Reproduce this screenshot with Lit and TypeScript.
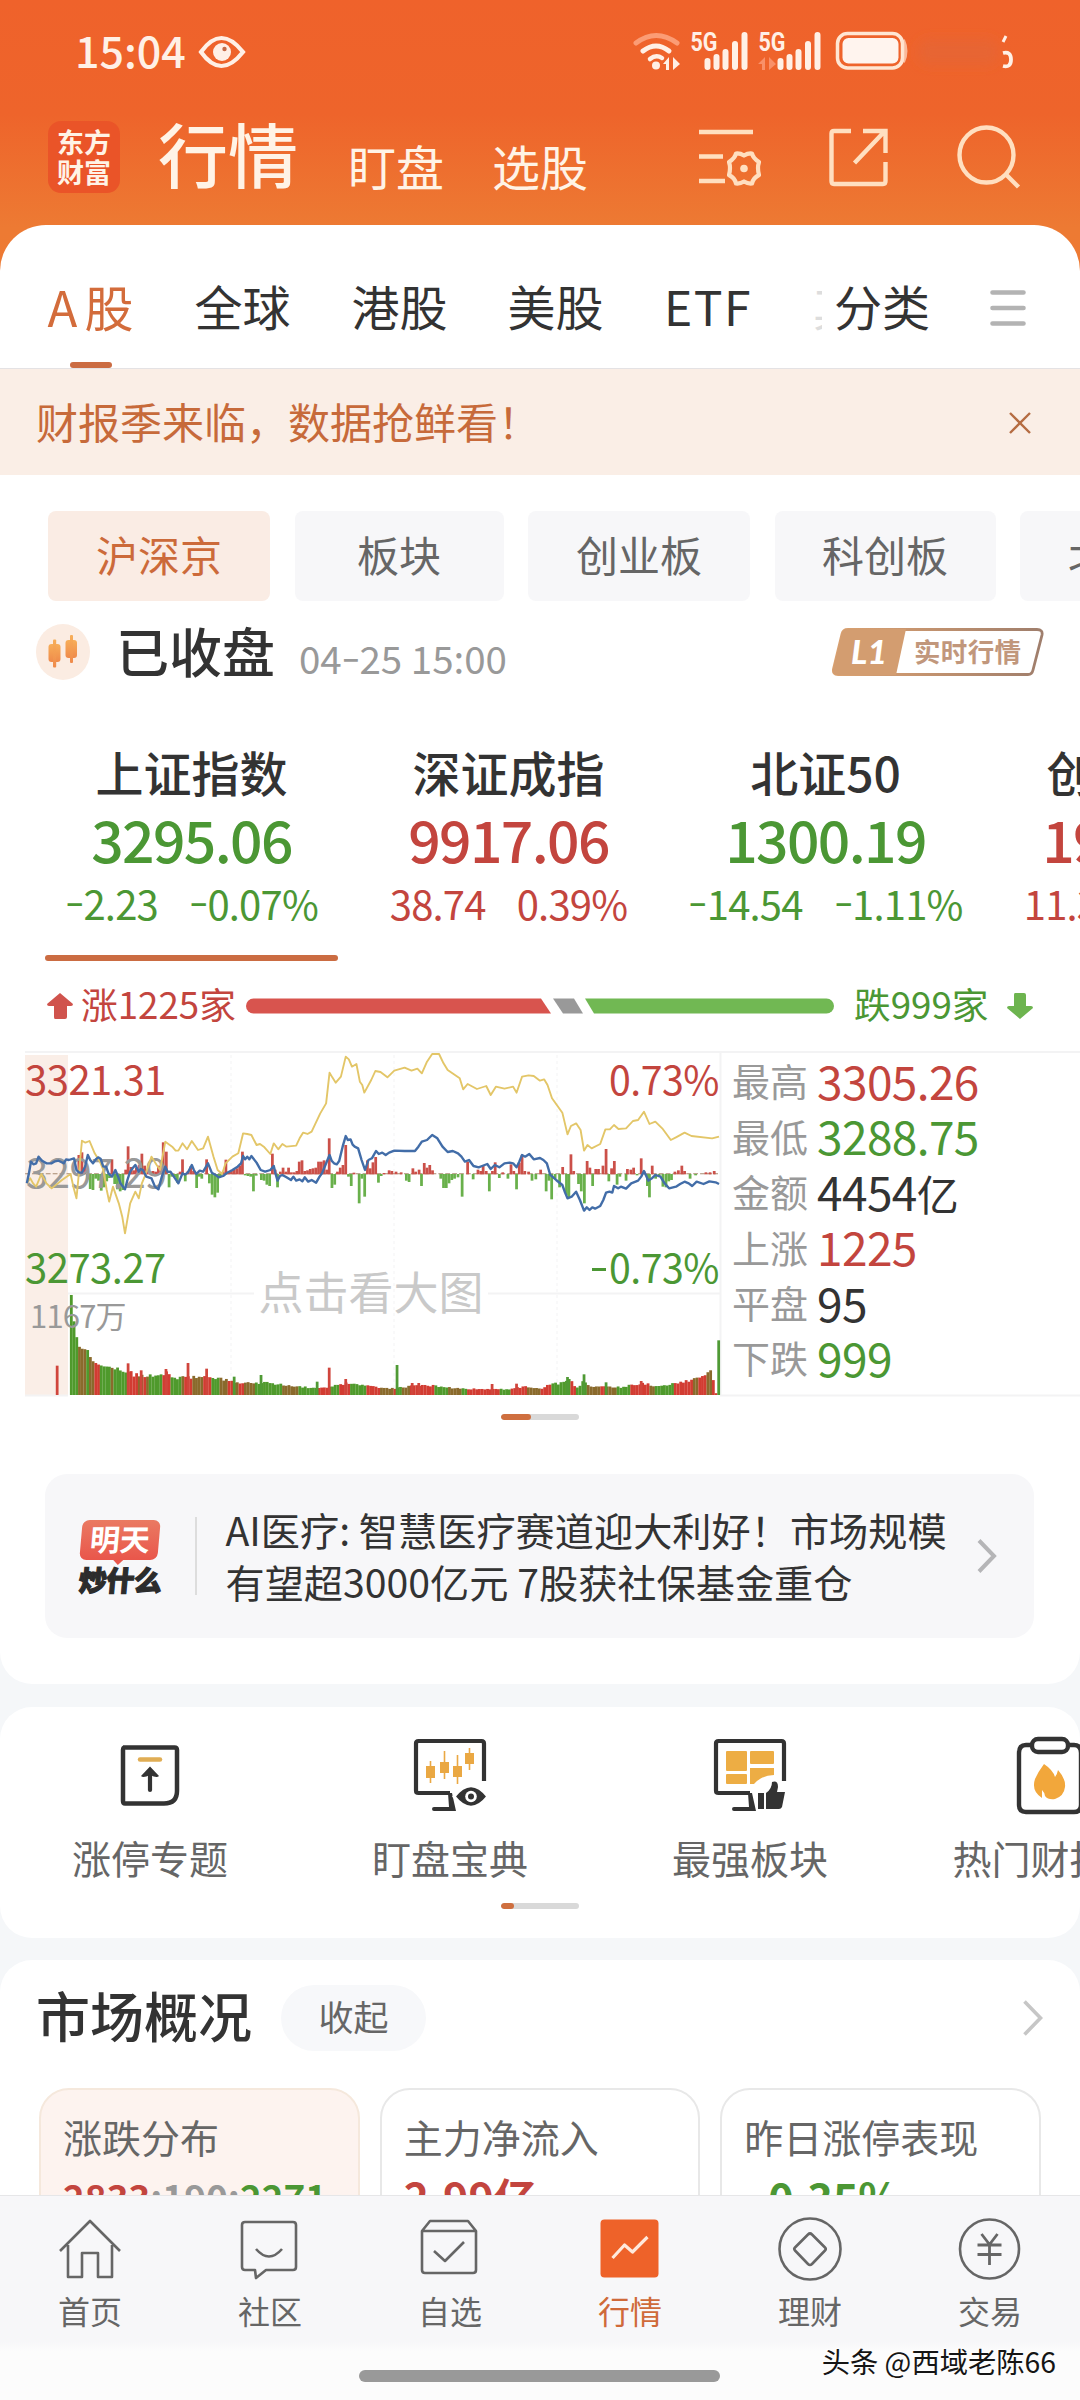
import { LitElement, html, svg, css } from "lit";
import { customElement } from "lit/decorators.js";

const TABS = [
  { label: "A股", w: 182, active: true },
  { label: "全球", w: 121 },
  { label: "港股", w: 193 },
  { label: "美股", w: 119 },
  { label: "ETF", w: 186, latin: true },
];

const CHIPS = [
  { label: "沪深京", w: 222, active: true },
  { label: "板块", w: 209 },
  { label: "创业板", w: 222 },
  { label: "科创板", w: 221 },
];

const INDICES = [
  { name: "上证指数", value: "3295.06", diff: "-2.23", pct: "-0.07%", cls: "down", active: true },
  { name: "深证成指", value: "9917.06", diff: "38.74", pct: "0.39%", cls: "up" },
  { name: "北证50", value: "1300.19", diff: "-14.54", pct: "-1.11%", cls: "down" },
  { name: "创业板指", value: "1947.19", diff: "11.33", pct: "0.59%", cls: "up" },
];

const STATS = [
  ["最高", "3305.26", "up"],
  ["最低", "3288.75", "down"],
  ["金额", "4454亿", "flat"],
  ["上涨", "1225", "up"],
  ["平盘", "95", "flat"],
  ["下跌", "999", "down"],
];

/* Hyphens sit at digit mid-height and are drawn wider than the font's own. */
const dashed = (s: string) => s.split(/(-)/).map((p) => (p === "-" ? html`<span class="dash">-</span>` : p));

/* Chart geometry is kept in plot units: 2.904 per px across, 3 per px down. */
const YELLOW =
  "78,640 88,625 96,640 105,650 120,612 135,640 150,655 180,630 205,612 213,650 222,685 230,600 238,512 248,518 260,513 275,550 290,575 300,600 310,660 317,695 328,650 345,700 355,740 363,790 378,700 393,665 403,685 412,640 420,620 440,560 455,585 465,600 480,515 500,530 510,542 518,542 530,520 543,538 557,513 575,540 590,535 604,500 612,530 620,560 632,600 645,612 655,580 675,560 692,550 706,490 718,492 730,495 745,525 755,522 768,532 785,552 795,520 808,538 820,522 832,530 860,527 870,505 880,488 893,492 905,485 930,430 947,400 957,308 965,322 975,338 990,320 1004,260 1013,268 1022,290 1035,282 1045,335 1052,345 1058,368 1078,330 1090,303 1105,306 1125,322 1145,302 1175,293 1195,302 1212,296 1225,310 1240,275 1255,252 1275,252 1288,280 1300,300 1335,325 1345,358 1358,342 1385,357 1412,348 1425,375 1440,350 1465,356 1490,350 1500,368 1516,320 1535,316 1550,318 1568,332 1580,328 1590,345 1603,385 1633,428 1648,493 1658,468 1673,460 1686,480 1696,542 1706,525 1718,535 1743,522 1758,478 1771,478 1783,465 1796,477 1818,475 1838,453 1853,450 1870,425 1886,462 1903,455 1923,475 1948,510 1963,502 1988,488 2008,498 2068,505 2088,500";
const BLUE =
  "78,640 84,610 90,575 97,583 105,580 112,560 122,572 135,580 150,580 160,574 170,572 185,580 192,568 200,570 215,565 222,600 230,608 238,608 247,590 255,555 262,570 270,580 278,568 285,562 292,566 300,590 308,590 315,610 325,620 335,600 343,620 350,640 357,650 363,658 370,630 378,605 385,595 393,585 403,605 409,597 415,600 425,620 440,625 450,650 460,658 470,620 480,590 487,606 495,605 505,620 518,640 530,610 537,614 545,608 557,585 563,600 570,612 580,602 590,605 604,580 615,608 625,614 635,622 648,618 660,608 675,600 690,590 700,580 706,558 712,568 718,560 724,568 730,558 745,578 757,600 770,605 785,600 795,588 800,610 806,632 813,618 820,615 832,622 845,630 852,620 860,632 870,628 878,634 885,622 895,635 905,630 918,638 928,620 935,610 945,585 957,555 963,572 970,580 978,583 985,573 995,530 1004,498 1010,510 1018,508 1024,524 1030,530 1040,535 1050,570 1060,600 1070,570 1080,565 1092,543 1100,552 1110,548 1120,555 1130,548 1145,542 1175,543 1205,543 1215,530 1225,515 1240,510 1255,495 1270,505 1285,530 1300,546 1315,543 1330,550 1340,560 1350,575 1362,570 1375,588 1390,592 1400,588 1415,582 1425,597 1437,585 1450,592 1465,580 1480,578 1490,580 1500,592 1508,575 1516,555 1525,560 1537,552 1550,568 1568,564 1578,570 1588,580 1598,615 1615,630 1633,645 1641,668 1648,685 1660,680 1673,665 1684,690 1696,722 1704,712 1712,720 1720,712 1728,716 1743,708 1752,690 1760,668 1770,665 1778,668 1783,648 1795,655 1803,650 1818,656 1833,640 1853,632 1862,620 1870,603 1883,632 1893,625 1903,615 1918,620 1930,640 1943,655 1963,650 1975,642 1988,635 2000,640 2010,648 2023,635 2043,642 2060,634 2078,637 2088,642";

/* [x, height]: positive rises in red, negative falls in green */
const FLOW: number[][] = [
  [229,58],[238,66],[246,20],[254,-16],[262,-45],[270,-48],[278,-14],[286,-20],[294,-50],[302,-40],[310,-22],[318,-12],[325,45],[333,-30],[341,-46],[349,-52],[357,-48],[365,14],[372,84],[380,22],[388,12],[396,20],[404,28],[412,62],[420,26],[428,14],[436,8],[444,10],[452,8],[460,26],[468,36],[474,96],[483,68],[491,-40],[499,-8],[507,-10],[515,-26],[523,8],[530,45],[538,-22],[546,10],[554,24],[562,10],[571,-42],[579,-8],[586,-14],[600,45],[608,-28],[616,-62],[624,-70],[632,-56],[640,-6],[648,8],[656,44],[664,8],[672,12],[680,14],[688,18],[696,26],[704,68],[712,-4],[720,-6],[728,-8],[736,-52],[744,-5],[759,-18],[767,-20],[775,-32],[783,-36],[791,62],[799,14],[806,-40],[814,8],[822,20],[830,8],[838,20],[846,6],[854,6],[862,10],[869,38],[877,42],[885,10],[893,12],[901,16],[909,18],[917,20],[925,38],[933,38],[941,42],[949,14],[956,108],[964,-42],[972,-32],[980,8],[988,20],[996,28],[1004,88],[1012,-8],[1020,-36],[1028,5],[1043,-88],[1051,-14],[1059,-68],[1067,42],[1075,18],[1083,36],[1091,52],[1099,-26],[1107,-6],[1115,4],[1130,12],[1138,10],[1150,8],[1165,6],[1180,-20],[1188,-24],[1199,18],[1207,8],[1217,14],[1224,-36],[1232,34],[1240,20],[1248,28],[1256,12],[1280,-14],[1288,-42],[1296,-42],[1304,-28],[1312,-18],[1320,-14],[1330,-10],[1342,-68],[1358,38],[1374,-16],[1388,14],[1396,10],[1403,28],[1412,10],[1421,-52],[1430,10],[1438,36],[1450,-12],[1460,6],[1475,-14],[1484,30],[1492,10],[1500,-46],[1508,34],[1516,58],[1524,10],[1535,8],[1545,-20],[1556,-16],[1570,14],[1586,-52],[1594,-20],[1602,-76],[1612,-14],[1625,-40],[1634,22],[1645,-64],[1652,-70],[1658,60],[1666,10],[1680,-30],[1688,-52],[1697,-88],[1705,40],[1713,20],[1721,-36],[1730,16],[1738,16],[1751,26],[1760,76],[1768,-22],[1776,18],[1784,40],[1792,-32],[1800,-8],[1818,-20],[1822,16],[1832,14],[1840,20],[1850,-4],[1862,48],[1870,10],[1880,-36],[1886,-70],[1894,26],[1904,-14],[1914,-6],[1925,-38],[1934,-40],[1942,-22],[1950,-18],[1960,8],[1970,12],[1980,26],[1988,10],[2004,-14],[2020,-4],[2050,6],[2062,6],[2074,10],
];

const VOL_KEYS: number[][] = [
  [203,300],[213,200],[220,168],[228,140],[250,136],[262,104],[280,92],[300,85],[330,78],[362,74],[385,62],[420,60],[480,66],[500,52],[560,56],[620,52],[660,44],[700,35],[760,38],[820,32],[900,22],[940,22],[970,30],[1003,36],[1060,28],[1100,22],[1140,20],[1200,28],[1260,28],[1320,20],[1400,18],[1480,18],[1520,26],[1568,18],[1603,40],[1622,34],[1650,50],[1670,22],[1690,40],[1710,26],[1800,24],[1860,36],[1900,28],[1960,35],[2020,50],[2050,66],[2066,78],[2069,6],[2080,6],
];
const VOL_SPIKES: number[][] = [
  [166,88,1],[372,95,1],[410,74,1],[482,78,1],[546,96,1],[600,79,1],[680,55,0],[758,60,0],[921,40,0],[956,82,1],[1004,48,1],[1153,90,0],[1197,36,1],[1216,36,1],[1429,33,1],[1500,34,1],[1648,54,0],[1696,62,0],[1760,38,0],[1862,42,1],[2087,164,0],
];

function volumeAt(x: number): number {
  for (let i = 1; i < VOL_KEYS.length; i++) {
    const [x1, h1] = VOL_KEYS[i];
    const [x0, h0] = VOL_KEYS[i - 1];
    if (x <= x1) return h0 + ((h1 - h0) * (x - x0)) / (x1 - x0);
  }
  return 6;
}

/* Runs of bar colours, [end x, colour]: g green, r red, b mixed */
const VOL_RUNS: [number, string][] = [
  [224, "g"], [246, "b"], [254, "g"], [270, "b"], [286, "r"], [318, "g"], [328, "b"], [366, "g"], [396, "r"], [412, "b"], [420, "r"], [432, "b"], [464, "g"], [488, "r"], [526, "g"], [534, "b"], [556, "r"], [588, "b"], [610, "r"], [634, "g"], [660, "b"], [676, "r"], [690, "b"], [704, "r"], [736, "b"], [792, "g"], [812, "g"], [860, "b"], [918, "g"], [950, "r"], [984, "g"], [1016, "r"], [1060, "g"], [1096, "r"], [1138, "b"], [1150, "r"], [1166, "g"], [1190, "b"], [1254, "r"], [1300, "g"], [1340, "b"], [1352, "g"], [1450, "r"], [1478, "g"], [1528, "r"], [1568, "b"], [1600, "r"], [1654, "g"], [1672, "r"], [1704, "g"], [1740, "b"], [1752, "r"], [1790, "b"], [1830, "g"], [1880, "r"], [1900, "b"], [1952, "g"], [2010, "r"], [2024, "b"], [2050, "r"], [2066, "b"], [2080, "r"],
];
const VOL_COLORS: Record<string, string> = { g: "#4f9a2c", r: "#d23c32", b: "#8a6a2c" };

function volumeBars() {
  const out = [];
  let seed = 11;
  let run = 0;
  for (let x = 203; x < 2078; x += 7.9) {
    seed = (seed * 1103 + 377) % 9973;
    const r = seed / 9973;
    while (run < VOL_RUNS.length - 1 && x > VOL_RUNS[run][0]) run++;
    const h = volumeAt(x) * (x < 300 ? 1 : 0.88 + r * 0.2);
    out.push(svg`<rect x=${x} y=${1275 - h} width="8.2" height=${h} fill=${VOL_COLORS[VOL_RUNS[run][1]]} />`);
  }
  for (const [x, h, up] of VOL_SPIKES) {
    out.push(svg`<rect x=${x - 4} y=${1275 - h} width="8" height=${h} fill=${up ? "#d0453c" : "#4f9a35"} />`);
  }
  return out;
}

const PLOT = "translate(0 -81) scale(.34436 .33333)";

const chart = svg`
  <rect x="25" y="4" width="43" height="340" fill="#faeee7"/>
  <g stroke="#f3f3f4" stroke-width="2">
    <path d="M25 1H1080M68 242.500H254M488 242.500H720M25 344.500H68M720 344.500H1080M720.500 1V344"/>
    <path d="M231 4V344M394 4V344M557 4V344" stroke-width="1" stroke-dasharray="3 3"/>
  </g>
  <g transform=${PLOT}>
    <path d="M73 611H2085" stroke="#a98a70" stroke-width="3" stroke-dasharray="14 6"/>
    ${FLOW.map(([x, h]) => svg`<rect x=${x - 4} y=${h > 0 ? 613 - h : 612} width="8" height=${Math.abs(h)} fill=${h > 0 ? "#cb5049" : "#69b04b"} />`)}
    ${volumeBars()}
  </g>
  <g letter-spacing="-.5">
    <text x="26" y="137" font-size="40" fill="#999">3297.29</text>
    <text x="30" y="277" font-size="31" fill="#999" letter-spacing="-.8">1167万</text>
  </g>
  <g transform=${PLOT}>
    <polyline points=${YELLOW} fill="none" stroke="#e3c668" stroke-width="5.500" stroke-linejoin="round"/>
    <polyline points=${BLUE} fill="none" stroke="#426da8" stroke-width="7" stroke-linejoin="round"/>
  </g>
  <g font-size="40" letter-spacing="-.5">
    <text x="25" y="44" fill="#c3453e">3321.31</text>
    <text x="25" y="232" fill="#4b9734">3273.27</text>
    <text x="609" y="44" fill="#c3453e" textLength="110" lengthAdjust="spacingAndGlyphs">0.73%</text>
    <text x="609" y="232" fill="#4b9734" textLength="110" lengthAdjust="spacingAndGlyphs">0.73%</text>
  </g>
  <path d="M592 218.500H606" stroke="#4b9734" stroke-width="3"/>
  <text x="371" y="259" font-size="45" fill="#c9c9c9" text-anchor="middle">点击看大图</text>
`;

const monitor = svg`
  <path d="M70 42V4.500Q70 2 67.500 2H4.500Q2 2 2 4.500V51.500Q2 54 4.500 54H36" fill="none" stroke="#333" stroke-width="4.200"/>
  <path d="M34 54H38L42 72H20Q18 72 18 70T20 68H35Z" fill="#333"/>`;

const TOOLS = [
  {
    label: "涨停专题",
    icon: svg`<path d="M9 8.500H60.500Q63 8.500 63 11V52Q63 64.500 50 64.500H11Q9 64.500 9 62V11Q9 8.500 11 8.500Z" fill="none" stroke="#333" stroke-width="4.500"/>
      <path d="M26 20.500H46" stroke="#e0ad54" stroke-width="4.500" stroke-linecap="round"/>
      <path d="M36 51V32" stroke="#333" stroke-width="4.200" stroke-linecap="round"/><path d="M36 27.500L45 37Q43 39.500 36 36Q29 39.500 27 37Z" fill="#333"/>`,
  },
  {
    label: "盯盘宝典",
    icon: svg`${monitor}<g fill="#eaa843"><path d="M12 27h9v12h-9zM26 23h9v11h-9zM39 27h9v11h-9zM51 14h9v11h-9z"/></g>
      <path d="M16.500 22V44M30.500 12V40M43.500 16V45M55.500 9V31" stroke="#eaa843" stroke-width="1.600"/>
      <path d="M40 57.500Q57 36 74 57.500Q57 79 40 57.500Z" fill="#333" stroke="#fff" stroke-width="3"/>
      <circle cx="57" cy="57.500" r="5.800" fill="#fff"/><circle cx="57" cy="57.500" r="3" fill="#333"/>`,
  },
  {
    label: "最强板块",
    icon: svg`${monitor}<g fill="#edad44"><rect x="12" y="12" width="21" height="20" rx="1"/><rect x="36" y="12" width="24" height="13" rx="1"/><rect x="12" y="35" width="21" height="10" rx="1"/><path d="M36 29H60V36Q48 36 40 45H36Z"/></g>
      <path d="M44 54h6v16h-6zM52 54Q58 50 58 43Q64 41 64 48L63 53H71L68 68Q67 70 65 70H52Z" fill="#333" stroke="#fff" stroke-width="2" paint-order="stroke"/>`,
  },
  {
    label: "热门财报",
    cut: true,
    icon: svg`<path d="M18 6H12Q5 6 5 14V66Q5 73 12 73H60Q67 73 67 66V14Q67 6 60 6H54" fill="none" stroke="#333" stroke-width="4.400"/>
      <rect x="18" y="0" width="36" height="13" rx="6" fill="#fff" stroke="#333" stroke-width="4.400"/>
      <path d="M28 59Q17 52 21 40Q24 33 30 25Q39 31 41 38Q43 36 44 31Q52 40 51 48Q50 57 41 60Q34 61 31 57Q31 54 28 51Z" fill="#f2a73b"/>`,
  },
];

const OVERVIEW = [
  { title: "涨跌分布", active: true },
  { title: "主力净流入" },
  { title: "昨日涨停表现" },
];

const NAV = [
  { label: "首页", icon: svg`<path d="M2 36L32 6L62 36M10 30V62H24V38H40V62H54V30"/>` },
  { label: "社区", icon: svg`<path d="M7 7H55Q58 7 58 10V52Q58 55 55 55H28L18 63L17 55H7Q4 55 4 52V10Q4 7 7 7ZM18 34Q31 49 44 34"/>` },
  { label: "自选", icon: svg`<path d="M4 16L12 6H50L58 16V55Q58 58 55 58H7Q4 58 4 55ZM4 16H58M16 36L27 46L46 27"/>` },
  {
    label: "行情",
    active: true,
    icon: svg`<rect x="2.500" y="4.500" width="58" height="58" rx="4" fill="#ee6229" stroke="none"/><path d="M14.500 43L26.500 30L34.500 37L49.500 22" stroke="#ffe9dc" stroke-width="3.200"/>`,
  },
  { label: "理财", icon: svg`<circle cx="32" cy="34" r="30.500"/><path d="M30 19.500Q32 17.500 34 19.500L47 32.500Q48.500 34 47 35.500L34 49Q32 51 30 49L17 35.500Q15.500 34 17 32.500Z"/>` },
  { label: "交易", icon: svg`<circle cx="31.500" cy="34" r="29.500"/><path d="M23.500 19L31.500 29.500L39.500 19M19.500 30H43.500M19.500 39.500H43.500M31.500 30V50" stroke-width="2.800"/>` },
];

@customElement("app-root")
export class AppRoot extends LitElement {
  static styles = css`
    :host {
      display: block;
      width: 1080px;
      height: 2400px;
      overflow: hidden;
      position: relative;
      background: #f5f7f9;
      font-family: "Noto Sans CJK SC", "Noto Sans", sans-serif;
      color: #333;
    }
    * { box-sizing: border-box; }
    svg { display: block; flex: none; overflow: visible; }
    .t { line-height: 1; padding-bottom: 0.12em; white-space: nowrap; }
    .dash { display: inline-block; width: 0.46em; text-align: center; transform: translateY(-0.09em) scaleX(1.4); }
    .up { color: #c3453e; }
    .down { color: #4b9734; }
    .flat { color: #333; }
    .page { display: flex; flex-direction: column; height: 2400px; }

    .top { flex: none; height: 271px; margin-bottom: -46px; background: linear-gradient(#ef622b 0, #ee642b 42%, #ed7a33 84%, #ee7a33); }
    .status { display: flex; align-items: center; height: 104px; padding-left: 75px; }
    .clock { font-size: 43px; font-weight: 500; color: #fff0e6; width: 124px; }
    .status .right { margin-left: auto; }
    .header { display: flex; align-items: center; height: 106px; padding-left: 48px; color: #fff3e6; }
    .logo { width: 72px; height: 72px; border-radius: 13px; background: #ea5428; display: grid; place-content: center; gap: 3px; font-size: 27px; font-weight: 700; line-height: 28px; }
    .logo span { height: 28px; margin-top: -1px; }
    .h1 { font-size: 70px; font-weight: 500; margin-left: 38px; width: 142px; }
    .h2 { font-size: 48px; margin-top: 21px; margin-left: 48px; }
    .hicons { display: flex; align-items: center; margin-left: auto; margin-right: 59px; gap: 68px; }

    .sheet { flex: none; height: 1459px; background: #fff; border-radius: 46px 46px 32px 32px; overflow: hidden; display: flex; flex-direction: column; }
    .tabs { height: 144px; padding-top: 23px; display: flex; border-bottom: 1px solid #e4e2e4; }
    .tab { position: relative; display: flex; align-items: center; justify-content: center; font-size: 48px; }
    .tab.active { color: #d36c3b; font-size: 49px; letter-spacing: 7px; padding-left: 6px; }
    .tab.latin { letter-spacing: 1.5px; }
    .tab.active::after { content: ""; position: absolute; left: 70px; bottom: 0; width: 42px; height: 6px; border-radius: 3px; background: #cb6c42; }
    .peek { width: 21px; display: flex; align-items: center; justify-content: flex-end; overflow: hidden; color: #ddd; font-size: 48px; }
    .peek .t { width: 9px; overflow: hidden; }
    .banner { height: 106px; display: flex; align-items: center; justify-content: space-between; padding: 3px 49px 0 36px; background: #faeee6; color: #c76a3a; font-size: 42px; }
    .chips { display: flex; gap: 24.5px; padding: 36px 0 0 48px; height: 126px; }
    .chip { flex: none; display: flex; align-items: center; justify-content: center; height: 90px; border-radius: 8px; background: #f7f7f9; color: #666; font-size: 42px; padding-top: 2px; }
    .chip.active { background: #faece4; color: #cc6a3a; }
    .chip.next { width: 222px; justify-content: flex-start; padding-left: 48px; }

    .session { display: flex; align-items: center; height: 102px; padding: 0 36px; }
    .session .name { font-size: 53px; font-weight: 500; margin: 3px 0 0 26px; }
    .session .time { font-size: 38.5px; color: #999; margin: 15px auto 0 24px; }
    .indices { display: flex; gap: 24px; padding: 41px 0 0 45px; height: 258px; overflow: hidden; }
    .index { flex: none; width: 293px; display: flex; flex-direction: column; align-items: center; }
    .index > div { display: flex; align-items: center; justify-content: center; white-space: nowrap; }
    .iname { height: 60px; font-size: 48px; font-weight: 500; }
    .ivalue { height: 75px; font-size: 57px; font-weight: 500; letter-spacing: -1.6px; }
    .ichange { height: 52px; font-size: 40px; gap: 31px; letter-spacing: -0.8px; }
    .mark { width: 293px; height: 6px; margin-top: 24px; border-radius: 3px; background: #cb6c42; }
    .breadth { display: flex; align-items: center; height: 90px; padding-left: 47px; font-size: 36.7px; }
    .breadth .l { width: 165px; margin-left: 8px; }
    .breadth .r { width: 153px; margin-left: 20px; }
    .plot { display: grid; height: 346px; }
    .plot > * { grid-area: 1 / 1; }
    .stats { display: flex; flex-direction: column; padding: 4px 0 0 732px; }
    .stat { display: flex; align-items: center; height: 55.4px; gap: 9px; }
    .stat .k { font-size: 38px; color: #999; }
    .stat .v { font-size: 46px; letter-spacing: -0.6px; }
    .stat .han { font-size: 42px; }
    .pager { width: 78px; height: 6px; border-radius: 3px; background: #d9d9d9; margin: 17px auto 0; overflow: hidden; }
    .pager i { display: block; height: 6px; border-radius: 3px; background: #cf6f3f; }

    .news { display: flex; align-items: center; margin: 54px 46px 0 45px; height: 164px; border-radius: 22px; background: #f7f7f9; padding: 0 37px 0 33px; }
    .ntag { width: 84px; display: flex; flex-direction: column; align-items: center; padding-top: 4px; }
    .bubble { position: relative; width: 78px; height: 40px; border-radius: 7px; background: linear-gradient(#ea7a62, #e9564b); color: #fff; font-weight: 700; font-size: 30px; display: flex; align-items: center; justify-content: center; transform: skewX(-5deg); }
    .bubble::after { content: ""; position: absolute; left: 34px; bottom: -5px; border: 5px solid transparent; border-top-color: #e9564b; border-bottom: 0; }
    .nsub { font-size: 28px; font-weight: 900; transform: skewX(-5deg); margin-top: 5px; color: #2c2c2c; letter-spacing: -0.5px; -webkit-text-stroke: 1.2px #2c2c2c; }
    .nline { width: 1.5px; height: 78px; background: #ddd; margin: 0 29px 0 33px; }
    .ntext { font-size: 39.2px; line-height: 52px; flex: 1; white-space: nowrap; margin-top: -3px; }

    .tools { flex: none; height: 231px; margin-top: 23px; border-radius: 32px; background: #fff; overflow: hidden; }
    .toolrow { display: flex; height: 196px; }
    .tool { flex: none; width: 300px; display: flex; flex-direction: column; align-items: center; padding-top: 32px; font-size: 39px; color: #666; }
    .tool .t { margin-top: 27px; }
    .tool.cut .t { width: 195px; }
    .tools .pager { margin-top: 0; }

    .market { flex: none; height: 235px; margin-top: 22px; border-radius: 32px 32px 0 0; background: #fff; overflow: hidden; }
    .mhead { display: flex; align-items: center; height: 116px; padding: 0 37px 0 36px; }
    .mtitle { font-size: 54px; font-weight: 500; }
    .pill { width: 145px; height: 66px; border-radius: 33px; background: #f7f8fa; color: #666; font-size: 35px; display: flex; align-items: center; justify-content: center; margin: 0 auto 0 29px; }
    .cards { display: flex; gap: 20px; padding: 12px 39px 0; }
    .card { width: 321px; height: 200px; border: 2px solid #e8e8e8; border-radius: 30px; padding: 27px 0 0 22px; color: #666; font-size: 39px; }
    .card.active { background: #fdf3ef; border-color: #f5e8dc; }
    .fig { font-weight: 700; font-size: 43px; line-height: 1; margin-top: 14px; white-space: nowrap; }
    .fig.small { font-size: 37px; margin-top: 17px; }
    .gray { color: #999; }
    .pad { padding-left: 8px; }

    .nav { flex: none; height: 205px; border-top: 1.5px solid #e6e6e8; background: linear-gradient(#f7f7f9 0 145px, #fcfcfc 155px); display: flex; flex-direction: column; position: relative; }
    .items { display: flex; }
    .item { width: 180px; display: flex; flex-direction: column; align-items: center; padding-top: 19px; font-size: 32px; color: #666; }
    .item svg { fill: none; stroke: #666; stroke-width: 2.6; stroke-linejoin: round; }
    .item .t { margin-top: 11px; }
    .item.active { color: #cf6a3a; }
    .home { width: 361px; height: 12px; border-radius: 6px; background: #999; position: absolute; left: 359px; top: 174px; }
    .credit { position: absolute; right: 24px; top: 151px; font-size: 28.3px; color: #151515; text-shadow: -1px -1px 1px #fff; }
  `;

  render() {
    return html`<div class="page">
      <div class="top">
        <div class="status">
          <div class="clock t">15:04</div>
          <svg width="46" height="32" viewBox="0 0 46 32">
            <path d="M2 16Q22 -12 44 16Q22 44 2 16Z" fill="none" stroke="#fff0e6" stroke-width="4.2" />
            <circle cx="23" cy="16" r="9" fill="#fff0e6" /><circle cx="25.500" cy="13" r="2.200" fill="#c66a45" />
          </svg>
          <svg class="right" width="460" height="104" viewBox="620 0 460 104">
            <g fill="none" stroke="#fff0e6" stroke-width="5" stroke-linecap="round">
              <path d="M636 43Q656 28 677 43" stroke="#fb9c75" />
              <path d="M643 51Q656 41 669 51" /><path d="M650 59Q656 54 662 58" stroke-width="4.500" />
            </g>
            <circle cx="656" cy="65.500" r="4" fill="#fff0e6" />
            <path d="M663 64L669 57V70H666V64ZM673 57L680 64L673 70Z" fill="#fff0e6" />
            <g fill="#fff0e6" font-size="26" font-weight="700" font-family="Roboto">
              <text x="690.500" y="51" textLength="27" lengthAdjust="spacingAndGlyphs">5G</text>
              <text x="758.500" y="51" textLength="27" lengthAdjust="spacingAndGlyphs">5G</text>
            </g>
            <g stroke="#fff0e6" stroke-width="6" stroke-linecap="round">
              <path d="M707.500 61V67M716.500 57V67M725.500 52V67M735 44V67M744.500 35V67M780.500 61V67M789.500 57V67M798.500 52V67M808 44V67M817.500 35V67" />
            </g>
            <path d="M758 64L765 57V70H762V64ZM769 57L776 64L769 70Z" fill="#f99068" />
            <rect x="837.500" y="33.500" width="65" height="34.500" rx="10" fill="none" stroke="#ffe6d3" stroke-width="3.500" />
            <rect x="842.500" y="38" width="56" height="25.500" rx="6" fill="#fff4ee" />
            <path d="M903 40Q908 51 903 62" stroke="#ffe0cc" stroke-width="4" fill="none" opacity=".7" />
            <g filter="url(#smudge)"><rect x="918" y="39" width="80" height="26" rx="10" fill="#dc6a40" opacity=".4" /></g>
            <filter id="smudge" x="-20%" y="-40%" width="140%" height="180%"><feGaussianBlur stdDeviation="6" /></filter>
            <path d="M1006 36L1003 42" stroke="#fff0e6" stroke-width="3" />
            <path d="M1003 53Q1011 51 1011 59.500Q1011 68 1003 66" fill="none" stroke="#fff0e6" stroke-width="3.800" />
          </svg>
        </div>
        <div class="header">
          <div class="logo"><span>东方</span><span>财富</span></div>
          <div class="h1 t">行情</div>
          <div class="h2 t">盯盘</div>
          <div class="h2 t">选股</div>
          <div class="hicons">
            <svg width="62" height="58" viewBox="0 0 62 58" fill="none" stroke="#ffdfc0" stroke-width="4.600">
              <path d="M0 4H54M0 28.500H24M0 53H26" />
              <path d="M37 25.500Q41 25 45 27.500Q49 25 53 25.500Q54 30 60 34Q58 40 60 47Q54 50 53 55.500Q49 56 45 53.500Q41 56 37 55.500Q36 50 30 47Q32 40 30 34Q36 30 37 25.500Z" stroke-width="4.200" stroke-linejoin="round" />
              <circle cx="45" cy="40.500" r="3.800" fill="#ffdfc0" stroke="none" />
            </svg>
            <svg width="60" height="60" viewBox="0 0 60 60" fill="none" stroke="#ffdfc0" stroke-width="4.400">
              <path d="M22 4H5Q2.500 4 2.500 6.500V54Q2.500 57 5 57H54Q56.500 57 56.500 54V35M34 4H56.500V26M55 5L25.500 36" />
            </svg>
            <svg width="64" height="64" viewBox="0 0 64 64" fill="none" stroke="#ffdfc0" stroke-width="4.400">
              <ellipse cx="29.500" cy="30" rx="27" ry="27.500" /><path d="M48.500 49L61.500 62" />
            </svg>
          </div>
        </div>
      </div>

      <div class="sheet">
        <div class="tabs">
          ${TABS.map((t) => html`<div class="tab ${t.active ? "active" : ""} ${t.latin ? "latin" : ""}" style="width:${t.w}px"><span class="t">${t.label}</span></div>`)}
          <div class="peek"><span class="t">其</span></div>
          <div class="tab" style="width:120px"><span class="t">分类</span></div>
          <div class="tab" style="width:132px">
            <svg width="36" height="36" viewBox="0 0 36 36"><path d="M2.500 2.500H33.500M2.500 18H33.500M2.500 33.500H33.500" stroke="#b3b3b3" stroke-width="4.600" stroke-linecap="round" /></svg>
          </div>
        </div>
        <div class="banner">
          <span class="t">财报季来临，数据抢鲜看！</span>
          <svg width="22" height="22" viewBox="0 0 22 22"><path d="M1 0L21 20M21 0L1 20" stroke="#b56c42" stroke-width="2.400" /></svg>
        </div>
        <div class="chips">
          ${CHIPS.map((c) => html`<div class="chip ${c.active ? "active" : ""}" style="width:${c.w}px"><span class="t">${c.label}</span></div>`)}
          <div class="chip next"><span class="t">北交所</span></div>
        </div>
        <div class="session">
          <svg width="54" height="56" viewBox="0 0 54 56">
            <defs><linearGradient id="cg" x2="0" y2="1"><stop stop-color="#f7ae58" /><stop offset="1" stop-color="#ef8a4b" /></linearGradient></defs>
            <ellipse cx="27" cy="28" rx="27" ry="28" fill="#fbece2" />
            <g fill="url(#cg)"><rect x="12.500" y="20" width="12" height="18" rx="3" /><rect x="17" y="15.500" width="3.200" height="28" rx="1" /><rect x="29.500" y="16" width="11.500" height="18" rx="3" /><rect x="34" y="11" width="3" height="28" rx="1" /></g>
          </svg>
          <div class="name t">已收盘</div>
          <div class="time t">${dashed("04-25 15:00")}</div>
          <svg width="212" height="48" viewBox="0 0 212 48">
            <defs><linearGradient id="lg"><stop stop-color="#dba270" /><stop offset=".35" stop-color="#c9966f" /><stop offset="1" stop-color="#9f7e6c" /></linearGradient></defs>
            <path d="M16 1.500H205Q211 1.500 210 7L201 42Q200 46.500 196 46.500H6Q.5 46.500 1.500 41L10 6Q11 1.500 16 1.500Z" fill="#fff" stroke="url(#lg)" stroke-width="2.800" />
            <path d="M15 1H74L64 47H6Q0 47 1 41L9.500 6Q11 1 15 1Z" fill="#d39d70" />
            <text x="19" y="36" font-size="33" font-weight="900" font-style="italic" fill="#fff" font-family="Lato" textLength="36" lengthAdjust="spacingAndGlyphs">L1</text>
            <text x="82" y="33.500" font-size="26.500" font-weight="700" fill="#c1977c" textLength="107">实时行情</text>
          </svg>
        </div>
        <div class="indices">
          ${INDICES.map(
            (x) => html`<div class="index">
              <div class="iname"><span class="t">${x.name}</span></div>
              <div class="ivalue ${x.cls}"><span class="t">${x.value}</span></div>
              <div class="ichange ${x.cls}"><span class="t">${dashed(x.diff)}</span><span class="t">${dashed(x.pct)}</span></div>
              ${x.active ? html`<i class="mark"></i>` : ""}
            </div>`
          )}
        </div>
        <div class="breadth">
          <svg width="26" height="26" viewBox="0 0 26 26"><path d="M13 0L26 11Q26 13 24 13H20V24Q20 26 18 26H8Q7 26 7 24V13H2Q0 13 0 11Z" fill="#d0534d" /></svg>
          <span class="l t up">涨1225家</span>
          <svg width="588" height="16" viewBox="0 0 588 16">
            <path d="M7.500 .5H295L305 15.500H7.500A7.500 7.500 0 0 1 7.500 .5Z" fill="#d8544e" />
            <path d="M307 .5H328L337 15.500H317Z" fill="#999" />
            <path d="M339 .5H580.500A7.500 7.500 0 0 1 580.500 15.500H348Z" fill="#71b853" />
          </svg>
          <span class="r t down">跌999家</span>
          <svg width="26" height="26" viewBox="0 0 26 26"><path d="M13 26L26 15Q26 13 24 13H19V2Q19 0 17 0H8Q7 0 7 2V13H2Q0 13 0 15Z" fill="#6db44f" /></svg>
        </div>
        <div class="plot">
          <svg width="1080" height="346" viewBox="0 0 1080 346">${chart}</svg>
          <div class="stats">
            ${STATS.map(
              ([k, v, c]) => html`<div class="stat"><span class="k t">${k}</span><span class="v t ${c}">${v.replace("亿", "")}${v.endsWith("亿") ? html`<span class="han">亿</span>` : ""}</span></div>`
            )}
          </div>
        </div>
        <div class="pager"><i style="width:30px"></i></div>
        <div class="news">
          <div class="ntag">
            <div class="bubble"><span class="t">明天</span></div>
            <div class="nsub t">炒什么</div>
          </div>
          <i class="nline"></i>
          <div class="ntext">AI医疗: 智慧医疗赛道迎大利好！市场规模<br />有望超3000亿元 7股获社保基金重仓</div>
          <svg width="20" height="34" viewBox="0 0 20 34"><path d="M2 1.500L17 17L2 32.500" fill="none" stroke="#b5b5b7" stroke-width="4" /></svg>
        </div>
      </div>

      <div class="tools">
        <div class="toolrow">
          ${TOOLS.map((t) => html`<div class="tool ${t.cut ? "cut" : ""}"><svg width="72" height="72" viewBox="0 0 72 72">${t.icon}</svg><span class="t">${t.label}</span></div>`)}
        </div>
        <div class="pager"><i style="width:13px"></i></div>
      </div>

      <div class="market">
        <div class="mhead">
          <span class="mtitle t">市场概况</span>
          <span class="pill"><span class="t">收起</span></span>
          <svg width="20" height="36" viewBox="0 0 20 36"><path d="M1.500 1.500L17.500 18L1.500 34.500" fill="none" stroke="#c6c6c6" stroke-width="3.600" /></svg>
        </div>
        <div class="cards">
          ${OVERVIEW.map(
            (o, i) => html`<div class="card ${o.active ? "active" : ""}">
              <div class="t">${o.title}</div>
              ${i === 0
                ? html`<div class="fig small"><span class="up">2833</span><span class="gray">:190:</span><span class="down">2271</span></div>`
                : i === 1
                ? html`<div class="fig up">2.99亿</div>`
                : html`<div class="fig down pad">-0.35%</div>`}
            </div>`
          )}
        </div>
      </div>

      <div class="nav">
        <div class="items">
          ${NAV.map((n) => html`<div class="item ${n.active ? "active" : ""}"><svg width="64" height="68" viewBox="0 0 64 68">${n.icon}</svg><span class="t">${n.label}</span></div>`)}
        </div>
        <i class="home"></i>
        <div class="credit t">头条 @西域老陈66</div>
      </div>
    </div>`;
  }
}
